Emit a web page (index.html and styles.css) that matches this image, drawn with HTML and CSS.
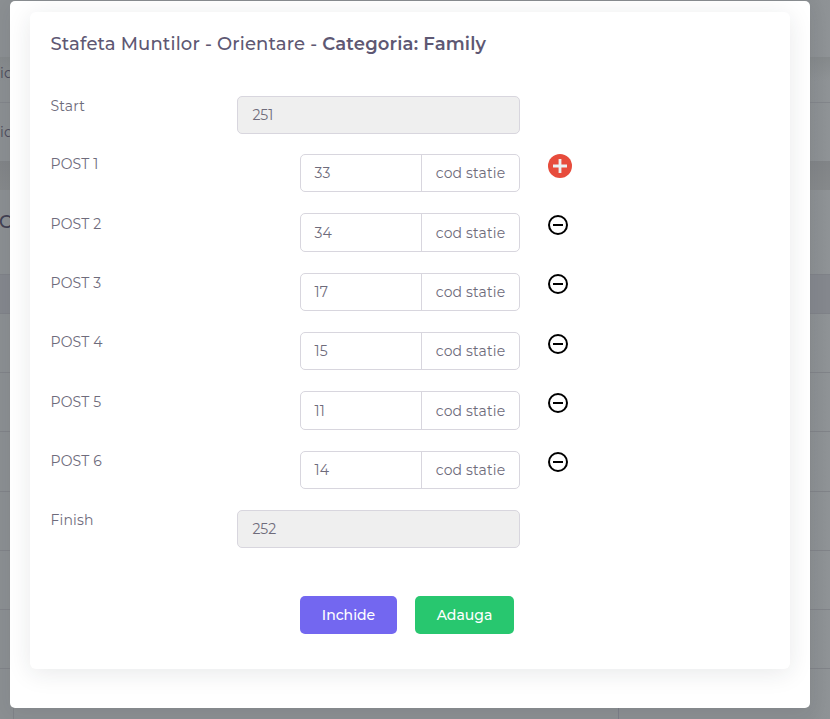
FILE: index.html
```
<!DOCTYPE html>
<html lang="ro">
<head>
<meta charset="utf-8">
<title>Stafeta Muntilor</title>
<link rel="stylesheet" href="styles.css">
</head>
<body>
<div class="page">
  <div class="page-top"></div>
  <div class="page-row row-first">ic</div>
  <div class="page-row row-second">ic</div>
  <div class="page-gap"></div>
  <div class="page-heading">C</div>
  <div class="page-thead"></div>
  <div class="page-line"></div>
  <div class="page-line"></div>
  <div class="page-line"></div>
  <div class="page-line"></div>
  <div class="page-line"></div>
  <div class="page-line"></div>
  <div class="page-foot"></div>
</div>
<div class="modal">
  <div class="card">
    <h4 class="title">Stafeta Muntilor - Orientare - <b>Categoria: Family</b></h4>
    <div class="form">
      <div class="row row-start"><label>Start</label><div class="field wide">251</div></div>
      <div class="row"><label>POST 1</label><div class="group"><div class="field">33</div><div class="addon">cod statie</div></div>
        <svg class="icon plus" viewBox="0 0 24 24"><circle cx="12" cy="12" r="12" fill="#e74c3c"/><path d="M12 5v14M5 12h14" stroke="#ecf0f1" stroke-width="2.8"/></svg></div>
      <div class="row"><label>POST 2</label><div class="group"><div class="field">34</div><div class="addon">cod statie</div></div>
        <svg class="icon" viewBox="0 0 24 24"><circle cx="12" cy="12" r="9" /><path d="M7 12h10"/></svg></div>
      <div class="row"><label>POST 3</label><div class="group"><div class="field">17</div><div class="addon">cod statie</div></div>
        <svg class="icon" viewBox="0 0 24 24"><circle cx="12" cy="12" r="9" /><path d="M7 12h10"/></svg></div>
      <div class="row"><label>POST 4</label><div class="group"><div class="field">15</div><div class="addon">cod statie</div></div>
        <svg class="icon" viewBox="0 0 24 24"><circle cx="12" cy="12" r="9" /><path d="M7 12h10"/></svg></div>
      <div class="row"><label>POST 5</label><div class="group"><div class="field">11</div><div class="addon">cod statie</div></div>
        <svg class="icon" viewBox="0 0 24 24"><circle cx="12" cy="12" r="9" /><path d="M7 12h10"/></svg></div>
      <div class="row"><label>POST 6</label><div class="group"><div class="field">14</div><div class="addon">cod statie</div></div>
        <svg class="icon" viewBox="0 0 24 24"><circle cx="12" cy="12" r="9" /><path d="M7 12h10"/></svg></div>
      <div class="row"><label>Finish</label><div class="field wide">252</div></div>
    </div>
    <div class="actions">
      <button class="btn close">Inchide</button>
      <button class="btn add">Adauga</button>
    </div>
  </div>
</div>
</body>
</html>
```

FILE: styles.css
```
* { box-sizing: border-box; }
body {
  margin: 0;
  height: 719px;
  overflow: hidden;
  position: relative;
  background: #8d9194;
  color: #6e6b7b;
  font: 14px/20px Montserrat, Inter, sans-serif;
  letter-spacing: .14px;
}
.page {
  height: 719px;
  display: flex;
  flex-direction: column;
  background: linear-gradient(90deg, #8b8f92 810px, #8f9396 830px);
  color: #4b4b5b;
}
.page > div { flex: none; }
.page-top { height: 57px; }
.page-row { padding: 6px 0 0; }
.row-first { height: 46px; border-bottom: 1px solid #82858a; background: linear-gradient(#85898b, transparent 24px); }
.row-second { height: 58px; padding-top: 19px; }
.page-gap { height: 29px; background: linear-gradient(#818487, #86898b); }
.page-heading { height: 84px; padding-top: 22px; font-size: 18px; font-weight: 500; color: #414052; margin-left: -1px; }
.page-thead { height: 40px; background: #84878d; border-top: 1px solid #7f8288; border-bottom: 1px solid #7f8288; }
.page-line { height: 59.2px; border-bottom: 1px solid #808388; }
.page-foot { flex: 1 !important; width: 606px; margin-left: 13px; border-left: 1px solid #808388; border-right: 1px solid #7c7e88; }
.modal {
  position: absolute;
  left: 10px;
  top: 1px;
  width: 800px;
  height: 707px;
  padding: 11px 20px 39px;
  background: #fff;
  border-radius: 5px;
  box-shadow: 0 5px 20px rgba(34, 41, 47, .08);
}
.card {
  height: 657px;
  padding: 20px 21px;
  border-radius: 6px;
  background: #fff;
  box-shadow: 0 4px 24px rgba(34, 41, 47, .1);
}
.title {
  margin: 0 0 40px -.5px;
  height: 24px;
  font-size: 18px;
  line-height: 24px;
  font-weight: 500;
  letter-spacing: .16px;
  color: #5e5873;
  white-space: pre;
}
.title b { font-weight: 600; }
.form { height: 472px; }
.row { display: grid; grid-template-columns: 186px 283px auto; height: 59.3px; align-items: start; }
.row-start { height: 58.2px; }
.row label { margin-left: -.5px; padding-top: .2px; }
.field, .group { height: 38.3px; }
.field { padding: 8.2px 14.4px 0; letter-spacing: 0; }
.wide { border: 1px solid #d8d6de; background: #efefef; border-radius: 5px; }
.group { display: flex; margin-left: 63px; border: 1px solid #d8d6de; border-radius: 5px; }
.group .field { width: 120px; padding-left: 13.6px; height: 100%; }
.addon { flex: 1; padding-top: 8.2px; text-align: center; border-left: 1px solid #d8d6de; }
.icon { width: 24px; height: 24px; margin: -.4px 0 0 26px; fill: none; stroke: #000; stroke-width: 2; }
.plus { margin: 0 0 0 28px; stroke: none; }
.actions { display: flex; gap: 18px; margin: 28px 0 0 249px; }
.btn {
  height: 38px;
  padding: 0;
  border: 0;
  border-radius: 5px;
  color: #fff;
  font: 500 14px/20px Montserrat, Inter, sans-serif;
}
.close { width: 97px; background: #7367f0; }
.add { width: 99px; background: #28c76f; }
```
